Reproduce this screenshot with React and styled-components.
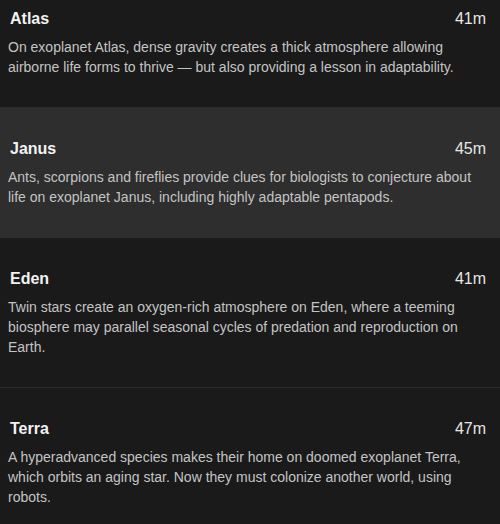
import React from "react";
import styled, { createGlobalStyle } from "styled-components";

const GlobalStyle = createGlobalStyle`
  body {
    margin: 0;
    background: #1a1a1a;
    font-family: "Liberation Sans", Arial, sans-serif;
  }
`;

const Viewport = styled.div`
  height: 524px;
  overflow: hidden;
  background: #1a1a1a;
`;

// list is scrolled a little, so the first row is cut at the top
const List = styled.ul`
  list-style: none;
  margin: -22px 0 0;
  padding: 0;
`;

const Row = styled.li`
  padding: 30px 14px 30px 8px;
  background: ${(props) => (props.active ? "#2e2e2e" : "#1a1a1a")};
  border-bottom: 1px solid ${(props) => (props.active ? "#2e2e2e" : "#2b2b2b")};
`;

const Header = styled.div`
  display: flex;
  justify-content: space-between;
  align-items: center;
  height: 22px;
  margin-bottom: 7px;
`;

const Title = styled.span`
  font-size: 16px;
  font-weight: bold;
  color: #f2f2f2;
  padding-left: 2px;
`;

const Time = styled.span`
  font-size: 16px;
  color: #e6e6e6;
`;

const Desc = styled.p`
  margin: 0;
  font-size: 14px;
  line-height: 20px;
  color: #c4c4c4;
  max-width: 480px;
`;

const episodes = [
  {
    title: "Atlas",
    time: "41m",
    text: "On exoplanet Atlas, dense gravity creates a thick atmosphere allowing airborne life forms to thrive — but also providing a lesson in adaptability.",
  },
  {
    title: "Janus",
    time: "45m",
    text: "Ants, scorpions and fireflies provide clues for biologists to conjecture about life on exoplanet Janus, including highly adaptable pentapods.",
    active: true,
  },
  {
    title: "Eden",
    time: "41m",
    text: "Twin stars create an oxygen-rich atmosphere on Eden, where a teeming biosphere may parallel seasonal cycles of predation and reproduction on Earth.",
  },
  {
    title: "Terra",
    time: "47m",
    text: "A hyperadvanced species makes their home on doomed exoplanet Terra, which orbits an aging star. Now they must colonize another world, using robots.",
  },
];

const App = () => {
  return (
    <Viewport>
      <GlobalStyle />
      <List>
        {episodes.map((ep) => (
          <Row key={ep.title} active={ep.active}>
            <Header>
              <Title>{ep.title}</Title>
              <Time>{ep.time}</Time>
            </Header>
            <Desc>{ep.text}</Desc>
          </Row>
        ))}
      </List>
    </Viewport>
  );
};

export default App;
